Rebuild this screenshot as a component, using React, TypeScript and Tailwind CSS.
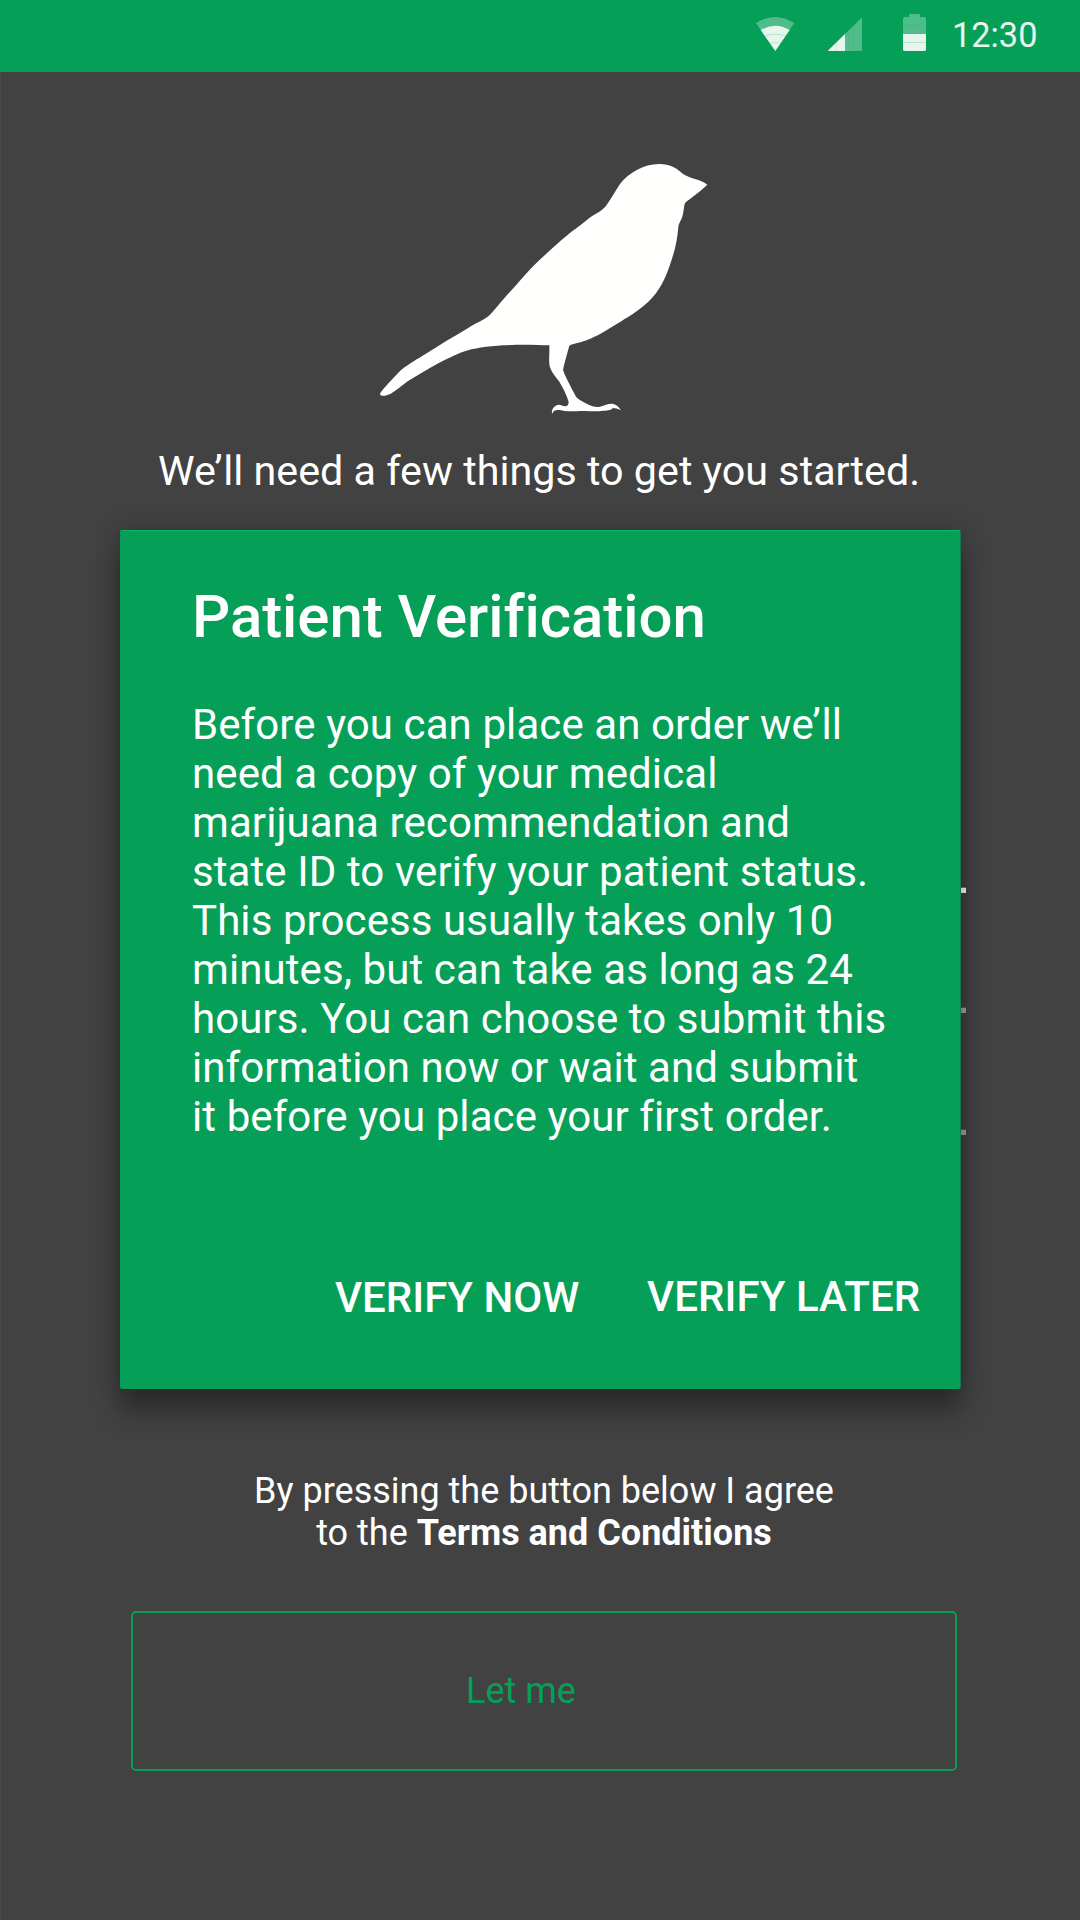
const bodyLines = [
  "Before you can place an order we’ll",
  "need a copy of your medical",
  "marijuana recommendation and",
  "state ID to verify your patient status.",
  "This process usually takes only 10",
  "minutes, but can take as long as 24",
  "hours. You can choose to submit this",
  "information now or wait and submit",
  "it before you place your first order.",
];

function WifiIcon() {
  return (
    <svg viewBox="78 0 117 216" className="h-[72px] w-[39px]" fill="white">
      <path d="M78 69 Q136 33 193 69 L136 153Z" fillOpacity="0.3" />
      <path d="M92 90 Q136 64 179 90 L136 153Z" fillOpacity="0.86" />
      <g fill="none" stroke="#059f57" strokeOpacity="0.25" strokeWidth="2.5">
        <path d="M104 108 Q136 97 168 108" />
        <path d="M119 130 Q136 124 153 130" />
      </g>
    </svg>
  );
}

function SignalIcon() {
  return (
    <svg viewBox="291 0 108 216" className="h-[72px] w-[36px]" fill="white">
      <path d="M293 153 L396 52 V153Z" fillOpacity="0.3" />
      <path d="M293 153 L345 102 V153Z" fillOpacity="0.86" />
      <path d="M319.5 128V153M370.5 78V153" stroke="#059f57" strokeOpacity="0.14" strokeWidth="2" />
    </svg>
  );
}

function BatteryIcon() {
  return (
    <svg viewBox="516 0 75 216" className="h-[72px] w-[25px]" fill="white">
      <path
        d="M537 42H570V51H583Q588 51 588 56V148Q588 153 583 153H524Q519 153 519 148V56Q519 51 524 51H537Z"
        fillOpacity="0.3"
      />
      <path d="M519 102H588V148Q588 153 583 153H524Q519 153 519 148Z" fillOpacity="0.86" />
      <path d="M519 76.5H588" stroke="#059f57" strokeOpacity="0.14" strokeWidth="2" />
      <path d="M519 127.5H588" stroke="#059f57" strokeOpacity="0.25" strokeWidth="2.5" />
    </svg>
  );
}

function Bird() {
  return (
    <svg viewBox="0 0 1050 810" className="h-[270px] w-[350px]" fill="#fffffe">
      <path d="M31 729C40 715 72 682 88 665C110 643 180 605 220 578C250 560 285 540 305 527C320 519 342 510 356 498C370 486 395 452 425 420C460 382 480 355 525 315C560 284 590 255 615 238C640 220 655 205 670 196C685 187 697 180 706 170C722 150 735 124 750 102C775 70 820 42 868 42C900 42 918 54 932 66C945 78 965 84 985 90C995 94 1004 98 1012 104C1001 114 985 128 965 143C955 150 946 156 944 161C942 170 941 185 937 200C934 210 926 220 925 230C922 270 915 300 903 335C888 382 868 425 835 455C810 480 770 503 740 522C705 545 665 567 640 574C625 580 605 582 598 587C592 610 584 635 579 660C588 685 605 715 618 740C626 750 640 755 652 762C665 770 680 772 690 770C705 766 715 760 728 761C740 764 746 770 753 781C743 776 735 774 728 774C726 780 715 782 700 782C680 785 650 783 630 783C600 785 580 783 570 780C560 779 554 781 551 784L546 792C544 780 550 770 560 766C570 761 575 768 585 769C592 769 596 764 596 756C592 738 578 712 568 695C556 680 545 668 540 652C535 632 539 620 538 586C500 584 440 583 400 586C350 589 310 595 280 605C235 620 150 670 110 696C90 710 65 735 45 737C38 738 28 738 31 729Z" />
    </svg>
  );
}

function VerificationDialog() {
  return (
    <div
      role="dialog"
      className="absolute top-[530px] left-[120px] h-[859px] w-[841px] rounded-[2px] border-t border-r border-t-[#06b864] border-r-[#127a4b] bg-[#059f57] pt-[50px] pl-[72px] shadow-[0_0_24px_rgba(0,0,0,0.22),0_24px_24px_rgba(0,0,0,0.3)]"
    >
      <h2 className="text-[60px] leading-[72px] font-medium tracking-[-0.06px] [font-variant-ligatures:none]">
        Patient Verification
      </h2>
      <div className="mt-[47px] text-[42px] leading-[49px] tracking-[0.09px] [font-variant-ligatures:none]">
        {bodyLines.map((line) => (
          <p key={line} className="whitespace-nowrap">
            {line}
          </p>
        ))}
      </div>
      <div className="mt-[131px] flex items-start text-[42px] leading-[49px] font-medium whitespace-nowrap">
        <button className="mt-px ml-[143px] w-[244px] text-left">VERIFY NOW</button>
        <button className="ml-[68px] text-left tracking-[0.07px]">VERIFY LATER</button>
      </div>
    </div>
  );
}

export default function App() {
  return (
    <div className="relative flex h-[1920px] w-[1080px] flex-col overflow-hidden bg-[#424242] font-[Roboto,sans-serif] text-white">
      <header className="flex h-[72px] shrink-0 items-start bg-[#059f57] pl-[756px]">
        <WifiIcon />
        <div className="ml-8">
          <SignalIcon />
        </div>
        <div className="ml-[39px]">
          <BatteryIcon />
        </div>
        <span className="mt-[15px] ml-[25px] text-[34.3px] leading-[40px] text-white/90">12:30</span>
      </header>

      <main className="flex grow flex-col border-l border-[#4a4a4a]">
        <div className="mt-[78px] ml-[369px]">
          <Bird />
        </div>
        <p className="mt-[27px] ml-[157px] text-[41.28px] leading-[48px] whitespace-nowrap">
          We’ll need a few things to get you started.
        </p>
        <div className="mt-[392px] ml-[130px] h-[248px] w-[835px]">
          <div className="h-[6px] border-t border-[#777] bg-white" />
          <div className="mt-[114px] h-[6px] border-t border-[#5c5c5c] bg-[#a3a3a3]" />
          <div className="mt-[116px] h-[6px] border-t border-[#5c5c5c] bg-[#a3a3a3]" />
        </div>
        <p className="mt-[335px] ml-[130px] w-[826px] text-center text-[36px] leading-[42px]">
          By pressing the button below I agree
          <br />
          to the <b className="font-bold">Terms and Conditions</b>
        </p>
        <button className="mt-[57px] ml-[130px] h-[160px] w-[826px] rounded-[5px] border-2 border-[#059f57] pl-[333px] text-left text-[36px] leading-[42px] text-[#059f57]">
          Let me
        </button>
      </main>

      <VerificationDialog />
    </div>
  );
}
